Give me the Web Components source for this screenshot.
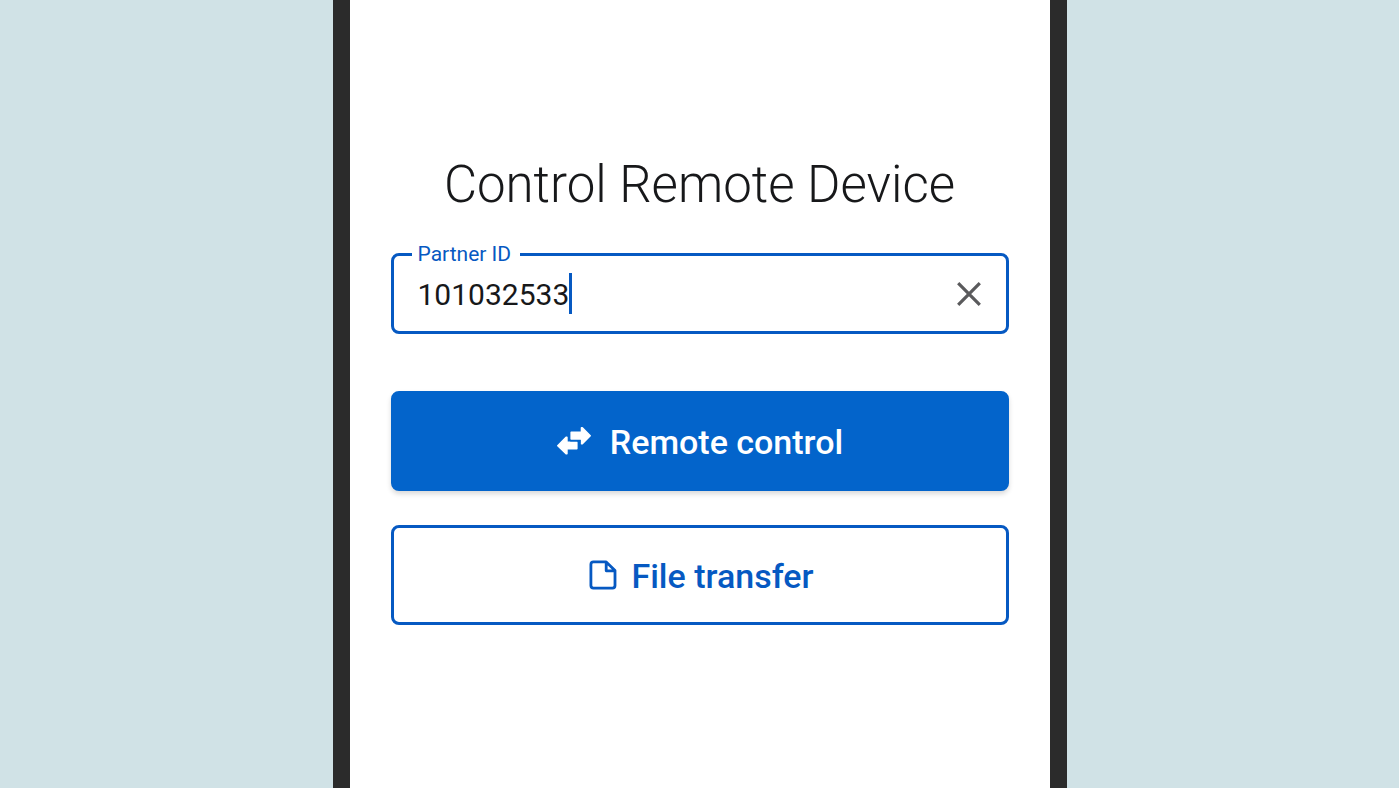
<!DOCTYPE html>
<html lang="en">
<head>
<meta charset="utf-8">
<meta name="viewport" content="width=device-width, initial-scale=1">
<title>Control Remote Device</title>
<style>
  body {
    margin: 0;
    min-height: 100vh;
    display: flex;
    justify-content: center;
    background: #d0e2e6;
    color: #17181a;
    font-family: Roboto, sans-serif;
    --accent: #0659c2;
    --primary: #0364cb;
  }
</style>
</head>
<body>
<phone-frame>
  <screen-title>Control Remote Device</screen-title>
  <outlined-field label="Partner ID" value="101032533"></outlined-field>
  <action-button variant="filled">
    <svg slot="icon" width="36" height="32" viewBox="0 1 36 32" aria-hidden="true">
      <path fill="currentColor" stroke="currentColor" stroke-width="1.6" stroke-linejoin="round" d="M15.2 7.3h10.3V2.9h.8L34.2 10.8 26.3 18.8h-.8v-4.8H15.2z M20.8 17.4v6.4H10.9v4.9h-.8L1.8 20.7l8.3-8.3h.8v5z"/>
      <path fill="none" stroke="var(--primary)" stroke-width="1.4" d="M14.2 15.7h9.6v3"/>
    </svg>
    Remote control
  </action-button>
  <action-button variant="outlined">
    <svg slot="icon" width="32" height="32" viewBox="-4 1 32 32" aria-hidden="true">
      <path fill="none" stroke="currentColor" stroke-width="2.8" stroke-linejoin="round" d="M4.4 2.9H17.2L26 11.6V26.6Q26 29.1 23.5 29.1H4.4Q1.9 29.1 1.9 26.6V5.4Q1.9 2.9 4.4 2.9z M17.2 3V11.8H26"/>
    </svg>
    File transfer
  </action-button>
</phone-frame>

<script>
  class PhoneFrame extends HTMLElement {
    constructor() {
      super();
      this.attachShadow({ mode: 'open' }).innerHTML = `
        <style>
          :host {
            box-sizing: border-box;
            display: block;
            width: 100%;
            max-width: 734px;
            padding: 155px 41px 40px;
            border: solid #2b2b2b;
            border-width: 0 17px;
            background: #fff;
          }
          main { display: flex; flex-direction: column; }
        </style>
        <main><slot></slot></main>`;
    }
  }

  class ScreenTitle extends HTMLElement {
    constructor() {
      super();
      this.attachShadow({ mode: 'open' }).innerHTML = `
        <style>
          :host { display: block; margin-bottom: 28px; }
          h1 { margin: 0; font-size: 51px; line-height: 60px; font-weight: 300; text-align: center; }
        </style>
        <h1><slot></slot></h1>`;
    }
  }

  class OutlinedField extends HTMLElement {
    constructor() {
      super();
      const root = this.attachShadow({ mode: 'open' });
      root.innerHTML = `
        <style>
          :host { display: block; margin-bottom: 57px; }
          fieldset {
            min-width: 0;
            margin: 0;
            padding: 7px 25px 17px 24px;
            border: 3px solid var(--accent);
            border-radius: 8px;
          }
          legend { margin-left: -6px; padding: 0 9px 0 6px; font-size: 21px; line-height: 23px; color: var(--accent); }
          .row { display: flex; align-items: center; height: 41px; }
          input {
            box-sizing: border-box;
            field-sizing: content;
            min-width: 0;
            height: 41px;
            padding: 1px 0 0;
            border: 0;
            outline: 0;
            background: none;
            color: inherit;
            caret-color: transparent;
            font: 30px Roboto, sans-serif;
          }
          .caret { width: 3px; height: 41px; background: var(--accent); }
          button { display: flex; margin: 0 0 0 auto; padding: 0; border: 0; background: none; color: #5a5a5c; cursor: pointer; }
        </style>
        <fieldset>
          <legend><label for="value"></label></legend>
          <div class="row">
            <input id="value" type="text" inputmode="numeric">
            <span class="caret"></span>
            <button type="button" aria-label="Clear">
              <svg width="24" height="24" viewBox="0 0 24 24" aria-hidden="true">
                <path d="M1.2 1.2 22.8 22.8M22.8 1.2 1.2 22.8" fill="none" stroke="currentColor" stroke-width="3.2"/>
              </svg>
            </button>
          </div>
        </fieldset>`;
      const input = root.querySelector('input');
      root.querySelector('label').textContent = this.getAttribute('label');
      input.value = this.getAttribute('value');
      root.querySelector('button').addEventListener('click', () => { input.value = ''; input.focus(); });
    }
  }

  class ActionButton extends HTMLElement {
    constructor() {
      super();
      this.attachShadow({ mode: 'open' }).innerHTML = `
        <style>
          :host { display: block; margin-bottom: 34px; }
          button {
            box-sizing: border-box;
            display: flex;
            align-items: center;
            justify-content: center;
            width: 100%;
            padding: 28px 27px 26px;
            border: 3px solid var(--accent);
            border-radius: 8px;
            background: #fff;
            color: var(--accent);
            font: 500 34px/40px Roboto, sans-serif;
            gap: 14px;
            cursor: pointer;
          }
          :host([variant="filled"]) button {
            gap: 18px;
            border-color: var(--primary);
            background: var(--primary);
            color: #fff;
            box-shadow: 0 3px 5px rgba(0, 0, 0, .15);
          }
        </style>
        <button type="button"><slot name="icon"></slot><span><slot></slot></span></button>`;
    }
  }

  customElements.define('phone-frame', PhoneFrame);
  customElements.define('screen-title', ScreenTitle);
  customElements.define('outlined-field', OutlinedField);
  customElements.define('action-button', ActionButton);
</script>
</body>
</html>
